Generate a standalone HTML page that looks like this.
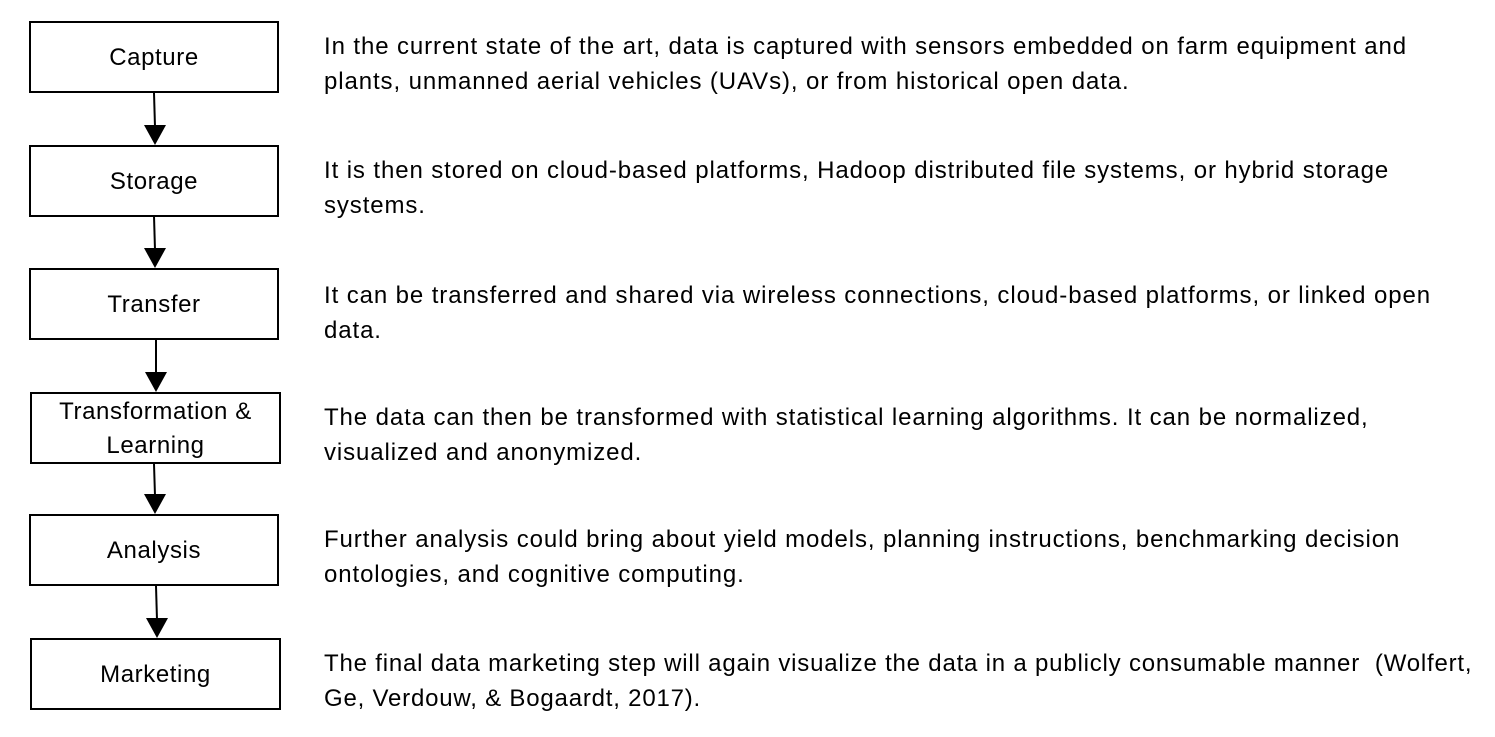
<!DOCTYPE html>
<html><head><meta charset="utf-8"><style>
body{margin:0;width:1495px;height:737px;background:#fff;position:relative;overflow:hidden;font-family:"Liberation Sans",Arial,sans-serif;color:#000}
.b{position:absolute;width:246px;height:66px;padding-top:2px;border:2px solid #000;display:flex;align-items:center;justify-content:center;text-align:center;font-size:24px;line-height:34px;letter-spacing:0.6px}
.t{position:absolute;left:324px;font-size:24px;line-height:34.5px;white-space:nowrap;letter-spacing:0.9px}
svg{position:absolute;left:0;top:0}
</style></head><body>
<svg width="1495" height="737">
<g stroke="#000" stroke-width="2" fill="#000">
<line x1="154" y1="93" x2="155" y2="127"/><polygon points="144,125 166,125 155,145" stroke="none"/>
<line x1="154" y1="216" x2="155" y2="250"/><polygon points="144,248 166,248 155,268" stroke="none"/>
<line x1="156" y1="340" x2="156" y2="374"/><polygon points="145,372 167,372 156,392" stroke="none"/>
<line x1="154" y1="464" x2="155" y2="496"/><polygon points="144,494 166,494 155,514" stroke="none"/>
<line x1="156" y1="586" x2="157" y2="620"/><polygon points="146,618 168,618 157,638" stroke="none"/>
</g></svg>
<div class="b" style="left:29px;top:21px">Capture</div>
<div class="b" style="left:29px;top:145px">Storage</div>
<div class="b" style="left:29px;top:268px">Transfer</div>
<div class="b" style="left:30px;top:392px;width:247px">Transformation &amp;<br>Learning</div>
<div class="b" style="left:29px;top:514px">Analysis</div>
<div class="b" style="left:30px;top:638px;width:247px">Marketing</div>
<div class="t" style="top:30px">In the current state of the art, data is captured with sensors embedded on farm equipment and<br>plants, unmanned aerial vehicles (UAVs), or from historical open data.</div>
<div class="t" style="top:154px">It is then stored on cloud-based platforms, Hadoop distributed file systems, or hybrid storage<br>systems.</div>
<div class="t" style="top:279px">It can be transferred and shared via wireless connections, cloud-based platforms, or linked open<br>data.</div>
<div class="t" style="top:401px">The data can then be transformed with statistical learning algorithms. It can be normalized,<br>visualized and anonymized.</div>
<div class="t" style="top:523px">Further analysis could bring about yield models, planning instructions, benchmarking decision<br>ontologies, and cognitive computing.</div>
<div class="t" style="top:647px;letter-spacing:0.8px">The final data marketing step will again visualize the data in a publicly consumable manner&nbsp; (Wolfert,<br>Ge, Verdouw, &amp; Bogaardt, 2017).</div>
</body></html>
